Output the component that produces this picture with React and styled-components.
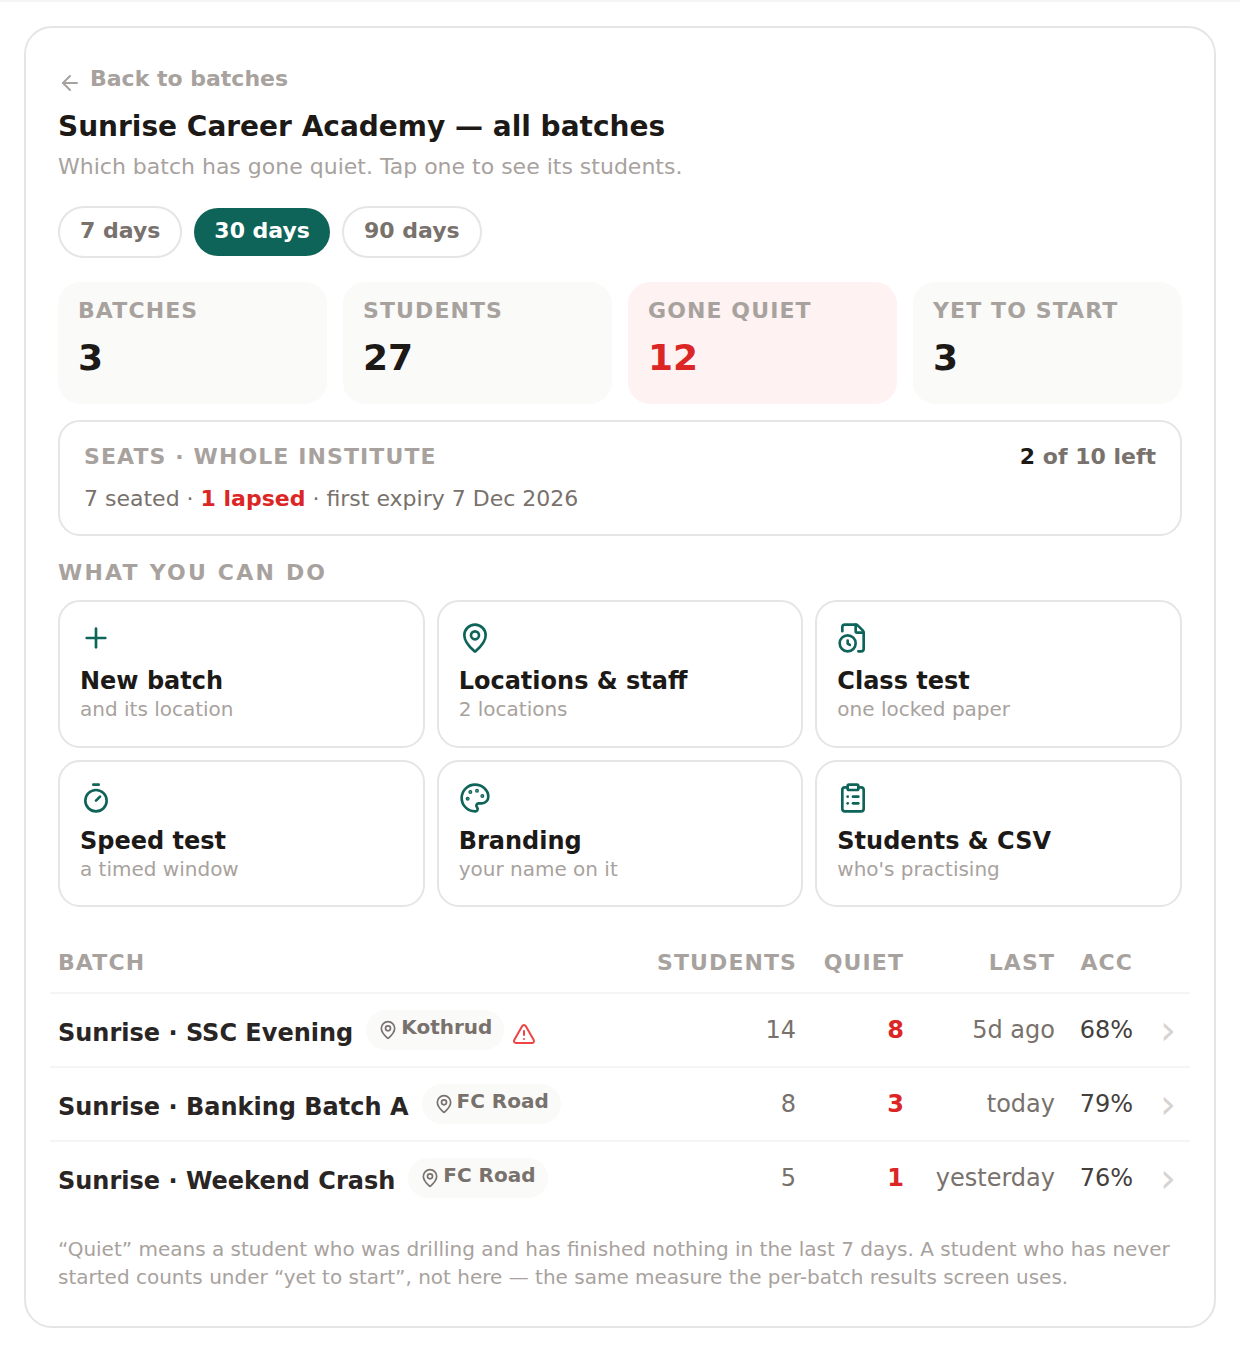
import React from "react";
import styled, { createGlobalStyle } from "styled-components";
import { ArrowLeft, Plus, MapPin, FileClock, Timer, Palette, ClipboardList, TriangleAlert } from "lucide-react";

const Global = createGlobalStyle`
  html, body { margin: 0; padding: 0; background: #fff; }
  body { font-family: "DejaVu Sans", sans-serif; color: #1c1917; }
`;
const Page = styled.div`
  border-top: 2px solid #f5f5f4;
  padding: 24px 24px 24px;
`;
const Card = styled.main`
  border: 2px solid #e7e5e4;
  border-radius: 28px;
  padding: 32px 32px 35px;
  background: #fff;
`;
const Back = styled.div`
  display: flex;
  align-items: center;
  gap: 8px;
  font-size: 22px;
  font-weight: 700;
  color: #a8a29e;
  line-height: 38px;
  svg { margin-top: 8px; }
`;
const Title = styled.h1`
  margin: 9px 0 0;
  font-size: 28px;
  line-height: 40px;
  font-weight: 700;
  color: #1c1917;
`;
const Sub = styled.p`
  margin: 4px 0 0;
  font-size: 22px;
  line-height: 32px;
  color: #a8a29e;
`;
const Pills = styled.div`
  display: flex;
  align-items: center;
  gap: 12px;
  margin-top: 23px;
`;
const Pill = styled.button`
  font: 700 22px/32px "DejaVu Sans", sans-serif;
  padding: 7px 20px 9px;
  border-radius: 999px;
  border: ${p => (p.$on ? "none" : "2px solid #e7e5e4")};
  background: ${p => (p.$on ? "#0f645a" : "#fff")};
  color: ${p => (p.$on ? "#fff" : "#78716c")};
`;
const Stats = styled.div`
  display: grid;
  grid-template-columns: repeat(4, 1fr);
  gap: 16px;
  margin-top: 24px;
`;
const Stat = styled.div`
  background: ${p => (p.$alert ? "#fef2f2" : "#fafaf9")};
  border-radius: 22px;
  padding: 16px 20px;
  height: 122px;
  box-sizing: border-box;
`;
const Label = styled.div`
  font-size: 22px;
  line-height: 26px;
  font-weight: 700;
  letter-spacing: 1.1px;
  color: #a8a29e;
`;
const Value = styled.div`
  margin-top: 10px;
  font-size: 36px;
  line-height: 48px;
  font-weight: 700;
  color: ${p => (p.$alert ? "#dc2626" : "#1c1917")};
`;
const Seats = styled.section`
  margin-top: 16px;
  border: 2px solid #e7e5e4;
  border-radius: 22px;
  padding: 20px 24px;
`;
const SeatsTop = styled.div`
  display: flex;
  justify-content: space-between;
  align-items: center;
  height: 30px;
`;
const SeatsLeft = styled.span`
  font-size: 22px;
  line-height: 28px;
  font-weight: 700;
  color: #78716c;
  b { color: #1c1917; }
`;
const SeatsLine = styled.div`
  margin-top: 11px;
  font-size: 22px;
  line-height: 31px;
  color: #78716c;
  b { color: #dc2626; font-weight: 700; }
`;
const Section = styled.div`
  margin-top: 24px;
  font-size: 22px;
  line-height: 26px;
  font-weight: 700;
  letter-spacing: 2.2px;
  color: #a8a29e;
`;
const Actions = styled.div`
  display: grid;
  grid-template-columns: repeat(3, 1fr);
  gap: 12px;
  margin-top: 14px;
`;
const Action = styled.div`
  border: 2px solid #e7e5e4;
  border-radius: 22px;
  padding: 20px 20px 24.5px;
  svg { display: block; color: #0f645a; }
`;
const ActionTitle = styled.div`
  margin-top: 11px;
  font-size: 24px;
  line-height: 32px;
  font-weight: 700;
`;
const ActionSub = styled.div`
  font-size: 20px;
  line-height: 24px;
  color: #a8a29e;
`;
const Table = styled.table`
  width: 1140px;
  margin: 34px -8px 0;
  border-collapse: collapse;
  table-layout: fixed;
`;
const Th = styled.th`
  padding: 8px 8px 15px;
  font-size: 22px;
  line-height: 28px;
  font-weight: 700;
  letter-spacing: 1.1px;
  color: #a8a29e;
  text-align: ${p => p.$align || "right"};
`;
const Tr = styled.tr`
  border-top: 2px solid #f5f5f4;
`;
const Td = styled.td`
  padding: 0 8px;
  height: 72px;
  font-size: 24px;
  text-align: right;
  color: ${p => p.$color || "#78716c"};
  font-weight: ${p => (p.$bold ? 700 : 400)};
`;
const Name = styled.div`
  display: flex;
  align-items: center;
  gap: 13px;
  font-size: 24px;
  font-weight: 700;
  color: #292524;
  text-align: left;
`;
const NameText = styled.span`
  margin-top: 5px;
`;
const Tag = styled.span`
  display: inline-flex;
  align-items: center;
  gap: 3px;
  padding: 0 12px;
  height: 40px;
  border-radius: 999px;
  background: #fafaf9;
  font-size: 20px;
  color: #78716c;
`;
const TagText = styled.span`
  margin-top: -6px;
`;
const Warn = styled(TriangleAlert)`
  margin: 8px 0 0 -5px;
  color: #ef4444;
`;
const Chevron = styled.span`
  display: block;
  font-size: 40px;
  line-height: 36px;
  color: #d6d3d1;
  text-align: left;
  padding-left: 11px;
`;
const Foot = styled.p`
  margin: 21px 0 0;
  font-size: 20px;
  line-height: 28px;
  color: #a8a29e;
`;

const actions = [
  [Plus, "New batch", "and its location"],
  [MapPin, "Locations & staff", "2 locations"],
  [FileClock, "Class test", "one locked paper"],
  [Timer, "Speed test", "a timed window"],
  [Palette, "Branding", "your name on it"],
  [ClipboardList, "Students & CSV", "who's practising"],
];
const rows = [
  ["Sunrise · SSC Evening", "Kothrud", true, 14, 8, "5d ago", "68%"],
  ["Sunrise · Banking Batch A", "FC Road", false, 8, 3, "today", "79%"],
  ["Sunrise · Weekend Crash", "FC Road", false, 5, 1, "yesterday", "76%"],
];

export default function App() {
  return (
    <Page>
      <Global />
      <Card>
        <Back><ArrowLeft size={24} strokeWidth={2} />Back to batches</Back>
        <Title>Sunrise Career Academy — all batches</Title>
        <Sub>Which batch has gone quiet. Tap one to see its students.</Sub>
        <Pills>
          <Pill>7 days</Pill>
          <Pill $on>30 days</Pill>
          <Pill>90 days</Pill>
        </Pills>
        <Stats>
          <Stat><Label>BATCHES</Label><Value>3</Value></Stat>
          <Stat><Label>STUDENTS</Label><Value>27</Value></Stat>
          <Stat $alert><Label>GONE QUIET</Label><Value $alert>12</Value></Stat>
          <Stat><Label>YET TO START</Label><Value>3</Value></Stat>
        </Stats>
        <Seats>
          <SeatsTop><Label>SEATS · WHOLE INSTITUTE</Label><SeatsLeft><b>2</b> of 10 left</SeatsLeft></SeatsTop>
          <SeatsLine>7 seated · <b>1 lapsed</b> · first expiry 7 Dec 2026</SeatsLine>
        </Seats>
        <Section>WHAT YOU CAN DO</Section>
        <Actions>
          {actions.map(([I, t, s]) => (
            <Action key={t}>
              <I size={32} strokeWidth={2} />
              <ActionTitle>{t}</ActionTitle>
              <ActionSub>{s}</ActionSub>
            </Action>
          ))}
        </Actions>
        <Table>
          <colgroup>
            <col style={{ width: 599 }} /><col style={{ width: 155 }} /><col style={{ width: 108 }} />
            <col style={{ width: 151 }} /><col style={{ width: 78 }} /><col style={{ width: 49 }} />
          </colgroup>
          <thead>
            <tr>
              <Th $align="left">BATCH</Th><Th>STUDENTS</Th><Th>QUIET</Th><Th>LAST</Th><Th>ACC</Th><Th />
            </tr>
          </thead>
          <tbody>
            {rows.map(r => (
              <Tr key={r[0]}>
                <Td>
                  <Name>
                    <NameText>{r[0]}</NameText>
                    <Tag><MapPin size={20} /><TagText>{r[1]}</TagText></Tag>
                    {r[2] && <Warn size={24} />}
                  </Name>
                </Td>
                <Td>{r[3]}</Td>
                <Td $bold $color="#dc2626">{r[4]}</Td>
                <Td>{r[5]}</Td>
                <Td $color="#44403c">{r[6]}</Td>
                <Td><Chevron>›</Chevron></Td>
              </Tr>
            ))}
          </tbody>
        </Table>
        <Foot>“Quiet” means a student who was drilling and has finished nothing in the last 7 days. A student who has never started counts under “yet to start”, not here — the same measure the per-batch results screen uses.</Foot>
      </Card>
    </Page>
  );
}
